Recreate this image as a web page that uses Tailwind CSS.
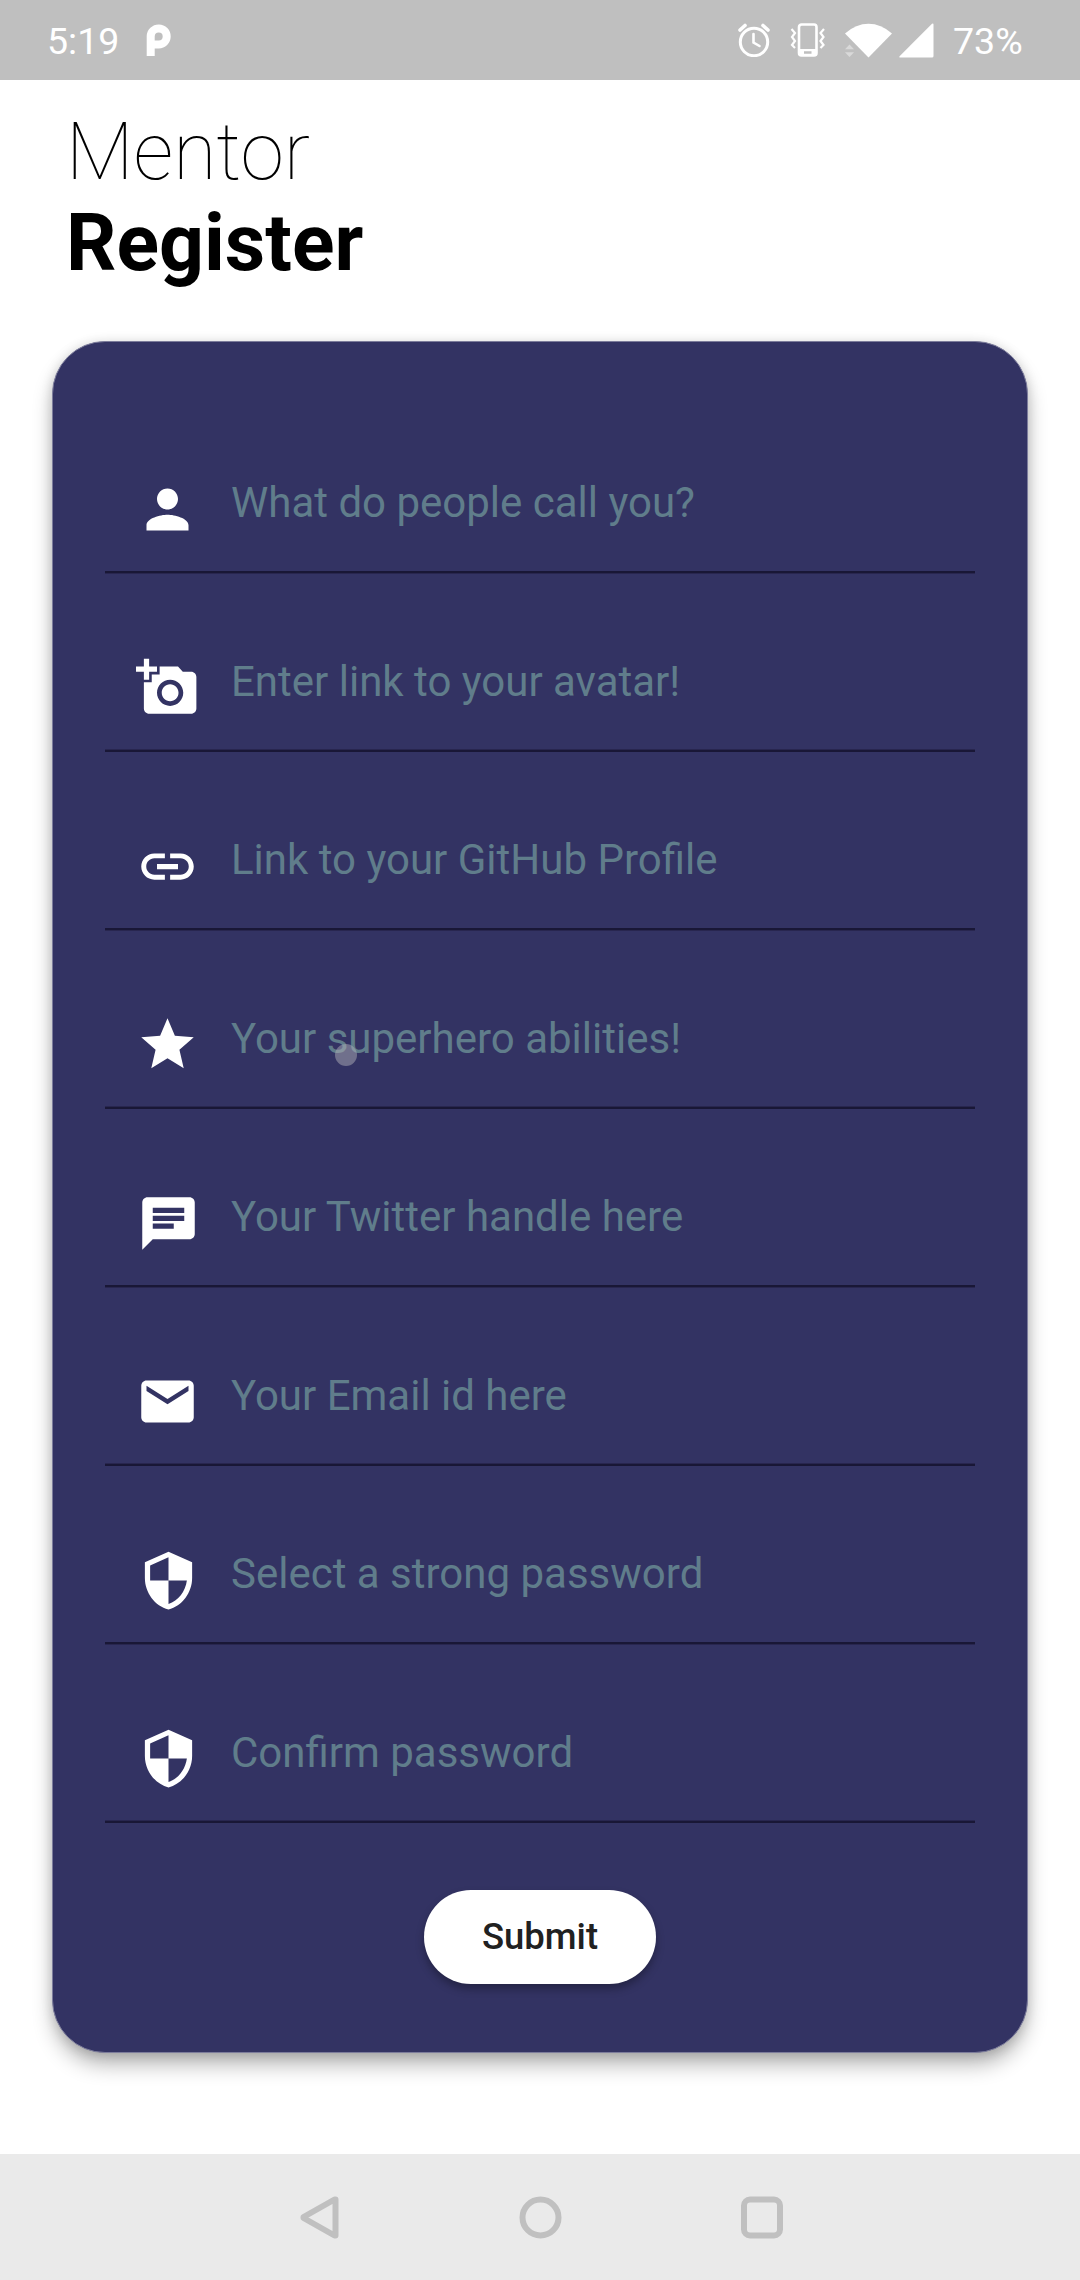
<!DOCTYPE html>
<html lang="en">
<head>
<meta charset="utf-8">
<title>Mentor Register</title>
<script src="https://cdn.jsdelivr.net/npm/@tailwindcss/browser@4"></script>
</head>
<body class="bg-white font-['Roboto',sans-serif]">
<div class="relative flex h-[2280px] w-[1080px] flex-col overflow-hidden bg-white">
  <!-- Status bar -->
  <header class="flex h-20 shrink-0 items-center bg-[#bfbfbf] pl-[47px] text-[37.5px] leading-none text-white">
    <span class="w-[99px] pt-[3px]">5:19</span>
    <svg class="h-8 w-[25px]" viewBox="0 0 25 32" fill="none"><path d="M4.700 32V12.300a8 8 0 1 1 8 8.200H8" stroke="#fff" stroke-width="8"/></svg>
    <svg class="ml-[567px] h-[34px] w-8" viewBox="0 0 32 34" fill="none" stroke="#fff" stroke-linecap="round"><circle cx="16" cy="19" r="13.7" stroke-width="3"/><path d="M2 7l5-4.500M30 7l-5-4.500" stroke-width="3.600"/><path d="M15.500 11v8.500l6 3.500" stroke-width="2.600"/></svg>
    <svg class="ml-5 h-[34px] w-9" viewBox="0 0 36 34" fill="none" stroke="#fff"><rect x="9" y="1.500" width="17.500" height="31" rx="2.500" stroke-width="2.600"/><path d="M8.500 26h18.500v5q0 2-2 2H10.500q-1.500 0-1.500-2z" fill="#fff" stroke="none"/><path d="M14 29.500h7.500" stroke="#bfbfbf" stroke-width="2.500"/><path d="M1.500 6l3.500 4-3 4 3 4-3 4 3 3M34 6l-3.500 4 3 4-3 4 3 4-3 3" stroke-width="2.200"/></svg>
    <svg class="ml-[18px] h-[35px] w-12" viewBox="0 0 48 35" fill="#fff"><path d="M1 10.500Q12 .8 24.500 .8T48 10.500L24.500 34.500z"/><path d="M1 26.300L5.500 21.500 10 26.300zM1 29.200h9L5.500 34z" fill="#d9d9d9"/></svg>
    <svg class="ml-[7px] h-[35px] w-[35px]" viewBox="0 0 35 35" fill="#fff"><path d="M33 .8q1.500-1.200 1.500 1V33q0 1.500-1.500 1.500H1.500q-2 0-.7-1.500z"/></svg>
    <span class="ml-[19px] pt-[3px]">73%</span>
  </header>

  <!-- Heading -->
  <h1 class="flex h-[261px] shrink-0 flex-col pl-[66px] pt-[27px] text-[78.75px] leading-[91px] text-black">
    <span class="font-thin">Mentor</span>
    <span class="font-bold">Register</span>
  </h1>

  <!-- Form card -->
  <main class="mx-[52px] flex h-[1712px] shrink-0 flex-col rounded-[53px] border border-[#7c7c9b] bg-[#333363] px-[52px] pt-[52.5px] shadow-[0_13px_22px_-3px_rgba(0,0,0,0.33),0_1px_12px_rgba(0,0,0,0.13)]">
    <div class="flex h-[178.5px] flex-col">
      <div class="flex flex-1 items-start pl-[31px]">
        <svg class="mt-[83px] size-[63px]" viewBox="0 0 24 24" fill="#fff"><path d="M12 12c2.210 0 4-1.790 4-4s-1.790-4-4-4-4 1.790-4 4 1.790 4 4 4zm0 2c-2.670 0-8 1.340-8 4v2h16v-2c0-2.660-5.330-4-8-4z"/></svg>
        <span class="ml-8 mt-[83.5px] text-[42px] leading-[49px] text-[#607d8b]">What do people call you?</span>
      </div>
      <div class="h-0.5 bg-[#191736] shadow-[0_1px_0_#28264f]"></div>
    </div>
    <div class="flex h-[178.5px] flex-col">
      <div class="flex flex-1 items-start pl-[31px]">
        <svg class="mt-[83px] size-[63px]" viewBox="0 0 24 24" fill="#fff"><path d="M3 4V1h2v3h3v2H5v3H3V6H0V4h3zm3 6V7h3V4h7l1.830 2H21c1.100 0 2 .9 2 2v12c0 1.100-.9 2-2 2H5c-1.100 0-2-.9-2-2V10h3zm7 9c2.760 0 5-2.240 5-5s-2.240-5-5-5-5 2.240-5 5 2.240 5 5 5zm-3.200-5c0 1.770 1.430 3.200 3.200 3.200s3.200-1.430 3.200-3.200-1.430-3.200-3.200-3.200-3.200 1.430-3.200 3.200z"/></svg>
        <span class="ml-8 mt-[83.5px] text-[42px] leading-[49px] text-[#607d8b]">Enter link to your avatar!</span>
      </div>
      <div class="h-0.5 bg-[#191736] shadow-[0_-1px_0_#28264f]"></div>
    </div>
    <div class="flex h-[178.5px] flex-col">
      <div class="flex flex-1 items-start pl-[31px]">
        <svg class="mt-[83px] size-[63px]" viewBox="0 0 24 24" fill="#fff"><path d="M3.900 12c0-1.710 1.390-3.100 3.100-3.100h4V7H7c-2.760 0-5 2.240-5 5s2.240 5 5 5h4v-1.900H7c-1.710 0-3.100-1.390-3.100-3.100zM8 13h8v-2H8v2zm9-6h-4v1.900h4c1.710 0 3.100 1.390 3.100 3.100s-1.390 3.100-3.100 3.100h-4V17h4c2.760 0 5-2.240 5-5s-2.240-5-5-5z"/></svg>
        <span class="ml-8 mt-[83.5px] text-[42px] leading-[49px] text-[#607d8b]">Link to your GitHub Profile</span>
      </div>
      <div class="h-0.5 bg-[#191736] shadow-[0_1px_0_#28264f]"></div>
    </div>
    <div class="flex h-[178.5px] flex-col">
      <div class="flex flex-1 items-start pl-[31px]">
        <svg class="mt-[83px] size-[63px]" viewBox="0 0 24 24" fill="#fff"><path d="M12 17.270L18.180 21l-1.640-7.030L22 9.240l-7.190-.61L12 2 9.190 8.630 2 9.240l5.460 4.730L5.820 21z"/></svg>
        <span class="ml-8 mt-[83.5px] text-[42px] leading-[49px] text-[#607d8b]">Your superhero abilities!</span>
      </div>
      <div class="h-0.5 bg-[#191736] shadow-[0_-1px_0_#28264f]"></div>
    </div>
    <div class="flex h-[178.5px] flex-col">
      <div class="flex flex-1 items-start pl-8">
        <svg class="mt-[83px] size-[63px]" viewBox="0 0 24 24" fill="#fff"><path d="M20 2H4c-1.100 0-1.990.9-1.990 2L2 22l4-4h14c1.100 0 2-.9 2-2V4c0-1.100-.9-2-2-2zM6 9h12v2H6V9zm8 5H6v-2h8v2zm4-6H6V6h12v2z"/></svg>
        <span class="ml-[31px] mt-[83.5px] text-[42px] leading-[49px] text-[#607d8b]">Your Twitter handle here</span>
      </div>
      <div class="h-0.5 bg-[#191736] shadow-[0_1px_0_#28264f]"></div>
    </div>
    <div class="flex h-[178.5px] flex-col">
      <div class="flex flex-1 items-start pl-[31px]">
        <svg class="mt-[83px] size-[63px]" viewBox="0 0 24 24" fill="#fff"><path d="M20 4H4c-1.100 0-1.990.9-1.990 2L2 18c0 1.100.9 2 2 2h16c1.100 0 2-.9 2-2V6c0-1.100-.9-2-2-2zm0 4l-8 5-8-5V6l8 5 8-5v2z"/></svg>
        <span class="ml-8 mt-[83.5px] text-[42px] leading-[49px] text-[#607d8b]">Your Email id here</span>
      </div>
      <div class="h-0.5 bg-[#191736] shadow-[0_-1px_0_#28264f]"></div>
    </div>
    <div class="flex h-[178.5px] flex-col">
      <div class="flex flex-1 items-start pl-8">
        <svg class="mt-[83px] size-[63px]" viewBox="0 0 24 24" fill="#fff"><path d="M12 1L3 5v6c0 5.550 3.840 10.740 9 12 5.160-1.260 9-6.450 9-12V5l-9-4zm0 10.990h7c-.53 4.120-3.280 7.790-7 8.940V12H5V6.300l7-3.110v8.800z"/></svg>
        <span class="ml-[31px] mt-[83.5px] text-[42px] leading-[49px] text-[#607d8b]">Select a strong password</span>
      </div>
      <div class="h-0.5 bg-[#191736] shadow-[0_1px_0_#28264f]"></div>
    </div>
    <div class="flex h-[178.5px] flex-col">
      <div class="flex flex-1 items-start pl-8">
        <svg class="mt-[83px] size-[63px]" viewBox="0 0 24 24" fill="#fff"><path d="M12 1L3 5v6c0 5.550 3.840 10.740 9 12 5.160-1.260 9-6.450 9-12V5l-9-4zm0 10.990h7c-.53 4.120-3.280 7.790-7 8.940V12H5V6.300l7-3.110v8.800z"/></svg>
        <span class="ml-[31px] mt-[83.5px] text-[42px] leading-[49px] text-[#607d8b]">Confirm password</span>
      </div>
      <div class="h-0.5 bg-[#191736] shadow-[0_-1px_0_#28264f]"></div>
    </div>
    <button class="mt-[67px] h-[94.5px] w-[232px] self-center rounded-full bg-white pt-px text-[36.5px] font-medium leading-none text-[#212121] shadow-[0_5px_8px_rgba(0,0,0,0.3)]">Submit</button>
  </main>

  <!-- System navigation -->
  <nav class="mt-auto flex h-[126px] shrink-0 items-center justify-between bg-[#eaeaea] px-[295px]">
    <svg class="size-[45px]" viewBox="-2 0 45 45" fill="none" stroke="#c0c0c0" stroke-width="6" stroke-linejoin="round"><path d="M38.500 4.500v36h-1L6.500 23v-1L37.500 4.500z"/></svg>
    <svg class="size-[45px]" viewBox="0 0 45 45" fill="none" stroke="#c0c0c0" stroke-width="6"><circle cx="22.500" cy="22.500" r="18"/></svg>
    <svg class="size-[45px]" viewBox="0 0 45 45" fill="none" stroke="#c0c0c0" stroke-width="6"><rect x="4" y="4.500" width="36" height="36" rx="6"/></svg>
  </nav>

  <!-- Touch indicator -->
  <div class="absolute left-[335px] top-[1044px] size-[22px] rounded-full bg-[#adadb5]/50"></div>
</div>
</body>
</html>
